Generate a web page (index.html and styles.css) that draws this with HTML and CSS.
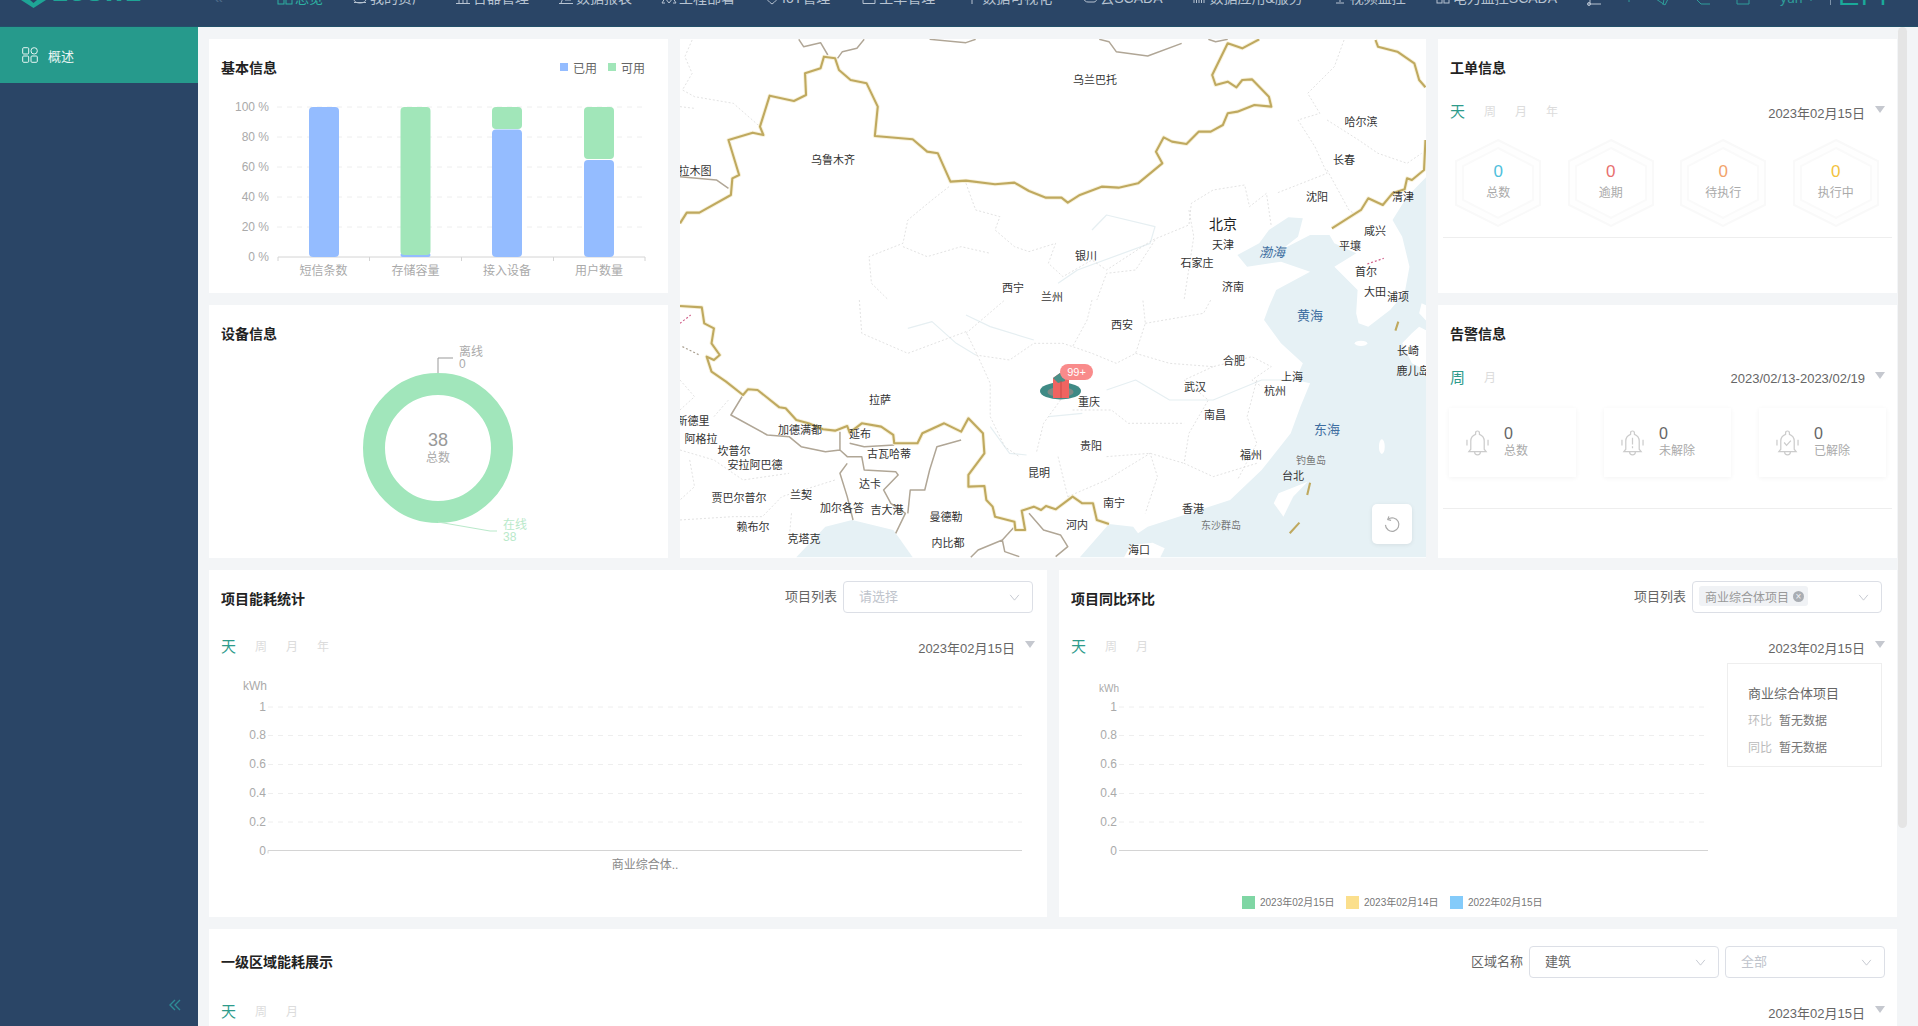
FILE: index.html
```html
<!DOCTYPE html>
<html lang="zh">
<head>
<meta charset="utf-8">
<title>概述</title>
<link rel="stylesheet" href="styles.css">
</head>
<body>
<header class="topbar">
  <div class="logo">
    <svg class="logo-mark" viewBox="0 0 25 8"><path d="M0 0H25L12.500 8Z" fill="#1ea596"/><path d="M9 0H16L12.500 3Z" fill="#2a4566"/></svg>
    <span class="logo-text">EOSWE</span>
  </div>
  <span class="collapse-top">«</span>
  <nav class="nav">
    <a class="nav-item is-active"><svg class="nav-icon" viewBox="0 0 16 16"><rect x="1" y="1" width="6" height="13"/><rect x="9" y="1" width="6" height="13"/></svg>总览</a>
    <a class="nav-item"><svg class="nav-icon" viewBox="0 0 16 16"><path d="M2 9c0 3 3 4 6 4s6-1 6-4M2 12.500h12"/></svg>我的资产</a>
    <a class="nav-item"><svg class="nav-icon" viewBox="0 0 16 16"><path d="M1 13.500h14M4 13V5M8 13V5M12 13V5"/></svg>台器管理</a>
    <a class="nav-item"><svg class="nav-icon" viewBox="0 0 16 16"><path d="M1 13.500h14M3 13l2-5M7 10h6"/></svg>数据报表</a>
    <a class="nav-item"><svg class="nav-icon" viewBox="0 0 16 16"><path d="M1 13l3-5 4 5 4-5 3 5M1 13h3M12 13h3"/></svg>工程部署</a>
    <a class="nav-item nav-iot"><svg class="nav-icon" viewBox="0 0 16 16"><path d="M1 5c1 4 4 7 7 9 3-2 6-5 7-9"/></svg>IoT管理</a>
    <a class="nav-item"><svg class="nav-icon" viewBox="0 0 16 16"><path d="M2 5v8.500h12V5"/></svg>工单管理</a>
    <a class="nav-item"><svg class="nav-icon" viewBox="0 0 16 16"><path d="M8 2v12M5 5l3 4 3-4"/></svg>数据可视化</a>
    <a class="nav-item nav-cloud"><svg class="nav-icon" viewBox="0 0 16 16"><path d="M2 8c0 3 2 4 4 4h6c2 0 3-2 2-4"/></svg>云SCADA</a>
    <a class="nav-item"><svg class="nav-icon" viewBox="0 0 16 16"><path d="M3 4v9M8 4v9M13 4v9M5.500 4v9M10.500 4v9"/></svg>数据应用&amp;服务</a>
    <a class="nav-item"><svg class="nav-icon" viewBox="0 0 16 16"><path d="M8 2v10M4 13h8M5 8c1 2 5 2 6 0"/></svg>视频监控</a>
    <a class="nav-item"><svg class="nav-icon" viewBox="0 0 16 16"><rect x="2" y="1" width="5" height="12"/><rect x="9" y="1" width="5" height="12"/></svg>电力监控SCADA</a>
  </nav>
  <div class="top-tools">
    <svg class="tool tool-line" viewBox="0 0 16 16"><path d="M1 6h13M3 1v5"/><circle cx="2" cy="6" r="1.500"/></svg>
    <svg class="tool" viewBox="0 0 16 16"><path d="M8 1v3"/></svg>
    <svg class="tool tool-gap" viewBox="0 0 16 16"><path d="M1 1l9 6 3-6M9 1l-1 6"/></svg>
    <svg class="tool tool-gap" viewBox="0 0 16 16"><path d="M1 1l5 5h9"/></svg>
    <svg class="tool" viewBox="0 0 16 16"><path d="M2 1v5h12V1"/></svg>
    <span class="user">yun</span>
    <svg class="user-caret" viewBox="0 0 8 8"><path d="M4 0v3"/></svg>
    <span class="tool-sep"></span>
    <span class="brand">EH</span>
  </div>
</header>

<div class="layout">
  <aside class="sidebar">
    <div class="side-item">
      <svg class="side-icon" viewBox="0 0 16 16"><rect x=".7" y=".7" width="6" height="6.300" rx="1"/><rect x="9" y=".7" width="6.300" height="6.300" rx="3"/><rect x=".7" y="9" width="6" height="6.300" rx="1"/><rect x="9" y="9" width="6.300" height="6.300" rx="1"/></svg>
      <span>概述</span>
    </div>
    <svg class="side-collapse" viewBox="0 0 12 12"><path d="M6 1 1 6l5 5M11 1 6 6l5 5"/></svg>
  </aside>

  <main class="main">
    <section class="grid-top">
      <article class="card">
        <div class="card-head">
          <h2 class="card-title">基本信息</h2>
          <div class="legend">
            <i class="swatch swatch-blue"></i><span>已用</span>
            <i class="swatch swatch-green"></i><span>可用</span>
          </div>
        </div>
        <svg class="chart" viewBox="209 78 459 215">
          <g class="grid-lines"><path d="M277 107H645M277 137H645M277 167H645M277 197H645M277 227H645"/></g>
          <path class="axis" d="M278 257H645M278 257v4M369.500 257v4M461.500 257v4M553.500 257v4M645 257v4"/>
          <g class="t-axis t-end">
            <text x="269" y="107">100 %</text><text x="269" y="137">80 %</text><text x="269" y="167">60 %</text><text x="269" y="197">40 %</text><text x="269" y="227">20 %</text><text x="269" y="257">0 %</text>
          </g>
          <g class="t-axis t-mid">
            <text x="323.500" y="271">短信条数</text><text x="415.500" y="271">存储容量</text><text x="507" y="271">接入设备</text><text x="599" y="271">用户数量</text>
          </g>
          <rect class="bar-blue" x="309" y="107" width="30" height="150" rx="4"/>
          <rect class="bar-blue" x="400.500" y="253" width="30" height="4" rx="2"/>
          <rect class="bar-green" x="400.500" y="107" width="30" height="148" rx="4"/>
          <rect class="bar-blue" x="492" y="129.500" width="30" height="127.500" rx="4"/>
          <rect class="bar-green" x="492" y="107" width="30" height="22" rx="4"/>
          <rect class="bar-blue" x="584" y="160" width="30" height="97" rx="4"/>
          <rect class="bar-green" x="584" y="107" width="30" height="52" rx="4"/>
        </svg>
      </article>

      <article class="card map-card">
        <svg class="map" viewBox="680 39 746 519">
          <rect x="680" y="39" width="746" height="519" fill="#fff"/>
          <g transform="translate(680 300) scale(.4847 .3333)">
            <path class="sea" d="M1540-370 1500-310 1470-240 1490-190 1505-100 1495-20 1465 30 1420 80 1400 70 1395 40 1398-30 1350-100 1395-140 1350-170 1340-195 1300-195 1240-150 1275-190 1285-245 1255-248 1215-210 1195-170 1150-135 1170-100 1240-115 1300-85 1230-30 1215 20 1205 60 1240 130 1285 190 1270 240 1300 250 1280 320 1260 400 1200 510 1135 600 1040 645 965 680 945 700 935 680 885 672 825 772H1540Z"/>
            <path class="sea" d="M240 772 300 680 355 660 440 690 455 720 480 772Z"/>
            <path class="land" d="M915 775 930 735 975 728 1000 745 990 775Z"/>
            <path class="land" d="M1295 545 1235 580 1225 610 1245 650 1265 590Z"/>
            <path class="land" d="M1525 80 1545 95V215L1510 190 1490 130 1510 100Z"/>
            <path class="land" d="M1530 10 1545 20V70L1525 40Z"/>
            <ellipse class="land" cx="1405" cy="130" rx="13" ry="8"/>
            <ellipse class="land" cx="1448" cy="440" rx="6" ry="22"/>

            <g class="river">
              <path d="M470 85 520 65 570 130 610 165M590 45 640 80 730 120M880 270 940 240 1010 300 1100 300 1200 240 1280 240M640 380 680 460 715 465M760 350 830 340"/>
            </g>
            <g class="province">
              <path d="M370 0 375 100 470 160 590 95 615 170 640 250 640 350 670 440 700 470M590 100 670 0M610 165 680 180 730 130 790 130 850 160 900 190 940 160 960 70 955 0M850 0 840 60 810 140M960 70 1080 40 1095 0M940 160 1010 190 1100 200 1180 170 1220 200 1180 240 1200 260M1100 200 1040 240 1090 300 1050 400 1040 490 1100 530 1190 490M1190 240 1170 350 1190 430 1150 540M790 290 750 370 735 460M810 330 890 330 925 370 1040 370M780 470 790 530 800 590M800 590 880 540 970 460 985 530 960 640M880 470 970 460 1040 490M0 240 30 290 0 330M70 350 100 300M0 450 70 480 130 540 225 520M0 660 110 650 170 650 210 590 320 540M20 480 30 560 0 600M230 640 225 720"/>
            </g>
            <path class="pink" d="M0 70 22 45"/>
            <path class="greydots" d="M5 140 40 165"/>
            <g class="intl">
              <path d="M130 285 105 345 180 405 225 410 250 440 300 455 330 450 330 395M330 450 345 470 375 470 380 510 445 515 450 525 420 570 435 610 465 640 445 700M345 490 330 520 345 590 357 660M350 430 380 440 442 435M580 420 530 440 515 510 505 570 475 570 470 640M720 640 750 690 785 705 800 740 775 770M690 680 665 720 615 750 600 772M665 720 670 755 700 770"/>
            </g>
            <path class="gold-halo" d="M0 18 45 22 50 70 70 85 65 130 82 165 70 180 55 170 65 215 95 245 130 285 140 268 160 270 205 322 218 325 240 360 265 370 295 388 320 392 345 378 350 398 375 370 415 380 440 405 442 430 490 430 500 400 545 370 580 395 595 355 625 400 628 460 595 525 595 560 628 558 632 600 645 620 650 650 690 665 692 690 712 690 705 632 730 620 745 630 755 618 775 628 810 590 830 610 852 610 860 660 885 672"/>
            <path class="gold" d="M0 18 45 22 50 70 70 85 65 130 82 165 70 180 55 170 65 215 95 245 130 285 140 268 160 270 205 322 218 325 240 360 265 370 295 388 320 392 345 378 350 398 375 370 415 380 440 405 442 430 490 430 500 400 545 370 580 395 595 355 625 400 628 460 595 525 595 560 628 558 632 600 645 620 650 650 690 665 692 690 712 690 705 632 730 620 745 630 755 618 775 628 810 590 830 610 852 610 860 660 885 672"/>
            <path class="gold" d="M1482 65 1476 92M1300 548 1294 585M1278 668 1258 700"/>
          </g>
          <g transform="translate(680 30) scale(.4847 .3333)">
            <g class="river"><path d="M850 600 880 555 980 590 970 640 820 720 780 760"/></g>
            <g class="province">
              <path d="M25 30 10 80 25 130 5 180 30 200 110 220 165 290M0 230 30 235M555 470 520 510 470 570 460 640 390 680 395 760 430 810M590 460 610 540 660 560 650 600 690 650 720 665 775 640 760 700 790 740 850 690 880 720 975 630 1050 585 1055 520 1100 480 1165 465 1175 530 1210 490 1220 590M1370 30 1350 110 1295 190 1320 250 1275 270 1310 350 1335 430 1230 490M1335 270 1400 330 1440 370 1500 400 1530 370M1335 420 1380 540 1390 550M460 650 510 680 580 650 640 670M980 630 940 720 880 730 860 810M1050 540 1060 620 1040 810"/>
            </g>
            <path class="pink" d="M1418 702 1452 685"/>
            <g class="intl">
              <path d="M245 28 255 50 290 38 305 75M325 85 335 65 365 55 380 28M515 28 590 38 610 28M865 28 885 35 900 65 965 78 1035 40M1090 28 1105 35 1130 28M0 440 75 450 100 475"/>
            </g>
            <path class="gold-halo" d="M0 580 14 548 40 548 105 495 108 445 122 435 100 330 150 308 172 315 165 290 185 197 235 213 260 195 258 130 290 115 297 80 320 85 328 120 352 150 385 160 408 230 402 318 480 328 510 365 532 370 558 455 590 452 650 463 690 458 720 483 755 503 787 503 800 518 825 495 870 470 905 473 945 460 995 400 982 365 998 322 1015 335 1045 342 1070 305 1095 305 1120 285 1130 250 1150 245 1185 225 1220 230 1215 200 1180 148 1160 150 1148 172 1130 155 1105 165 1098 135 1130 40 1160 55 1195 28M1435 30 1440 50 1480 65 1515 100 1525 150 1538 172M1538 330 1535 420 1510 450 1500 445 1495 478 1470 490 1450 525 1420 505 1405 540 1345 595"/>
            <path class="gold" d="M0 580 14 548 40 548 105 495 108 445 122 435 100 330 150 308 172 315 165 290 185 197 235 213 260 195 258 130 290 115 297 80 320 85 328 120 352 150 385 160 408 230 402 318 480 328 510 365 532 370 558 455 590 452 650 463 690 458 720 483 755 503 787 503 800 518 825 495 870 470 905 473 945 460 995 400 982 365 998 322 1015 335 1045 342 1070 305 1095 305 1120 285 1130 250 1150 245 1185 225 1220 230 1215 200 1180 148 1160 150 1148 172 1130 155 1105 165 1098 135 1130 40 1160 55 1195 28M1435 30 1440 50 1480 65 1515 100 1525 150 1538 172M1538 330 1535 420 1510 450 1500 445 1495 478 1470 490 1450 525 1420 505 1405 540 1345 595"/>
          </g>

          <g class="city">
            <text x="1095" y="80">乌兰巴托</text><text x="833" y="160">乌鲁木齐</text><text x="695" y="171">拉木图</text>
            <text x="1361" y="122">哈尔滨</text><text x="1344" y="160">长春</text><text x="1317" y="197">沈阳</text><text x="1403" y="197">清津</text>
            <text x="1375" y="231">咸兴</text><text x="1350" y="246">平壤</text><text x="1223" y="245">天津</text><text x="1197" y="263">石家庄</text>
            <text x="1086" y="256">银川</text><text x="1366" y="272">首尔</text><text x="1233" y="287">济南</text><text x="1375" y="292">大田</text><text x="1398" y="297">浦项</text>
            <text x="1013" y="288">西宁</text><text x="1052" y="297">兰州</text><text x="1122" y="325">西安</text><text x="1408" y="351">长崎</text><text x="1234" y="361">合肥</text>
            <text x="1413" y="371">鹿儿岛</text><text x="1292" y="377">上海</text><text x="1195" y="387">武汉</text><text x="1275" y="391">杭州</text><text x="880" y="400">拉萨</text>
            <text x="1089" y="402">重庆</text><text x="1215" y="415">南昌</text><text x="693" y="421">新德里</text><text x="800" y="430">加德满都</text><text x="860" y="434">延布</text>
            <text x="701" y="439">阿格拉</text><text x="1091" y="446">贵阳</text><text x="889" y="454">古瓦哈蒂</text><text x="734" y="451">坎普尔</text><text x="1251" y="455">福州</text>
            <text x="755" y="465">安拉阿巴德</text><text x="1293" y="476">台北</text><text x="1039" y="473">昆明</text><text x="870" y="484">达卡</text><text x="739" y="498">贾巴尔普尔</text>
            <text x="801" y="495">兰契</text><text x="1114" y="503">南宁</text><text x="842" y="508">加尔各答</text><text x="887" y="510">吉大港</text><text x="1193" y="509">香港</text>
            <text x="946" y="517">曼德勒</text><text x="753" y="527">赖布尔</text><text x="1077" y="525">河内</text><text x="804" y="539">克塔克</text><text x="948" y="543">内比都</text><text x="1139" y="550">海口</text>
          </g>
          <g class="city city-soft">
            <text x="1311" y="460">钓鱼岛</text><text x="1221" y="525">东沙群岛</text>
          </g>
          <text class="city-big" x="1223" y="224">北京</text>
          <g class="sea-name"><text class="italic" x="1272" y="252">渤海</text><text x="1310" y="315">黄海</text><text x="1327" y="429">东海</text></g>

          <ellipse cx="1060.500" cy="391" rx="20.500" ry="8.500" fill="#3f8a85"/>
          <ellipse cx="1060.500" cy="392" rx="13" ry="5" fill="#7f8a85"/>
          <path d="M1053 378 1060 373 1069 378V398H1053Z" fill="#ef6461"/>
          <path d="M1053 378 1060 373 1065 376V381L1058 383Z" fill="#4a9088"/>
          <path d="M1061 381V398" stroke="#c94a48"/>
          <rect x="1060" y="364" width="33" height="16" rx="8" fill="#f98b8b"/>
          <text class="badge-text" x="1076.500" y="372">99+</text>
        </svg>
        <button class="map-reset" type="button" aria-label="刷新">
          <svg viewBox="0 0 20 20"><path d="M5.500 4.800A7.500 7.500 0 1 1 2.700 11"/><path d="M6.500 1.500 5.300 5.200 9 6"/></svg>
        </button>
      </article>

      <article class="card">
        <div class="card-head"><h2 class="card-title">工单信息</h2></div>
        <div class="period">
          <div class="tabs"><span class="tab is-on">天</span><span class="tab">周</span><span class="tab">月</span><span class="tab">年</span></div>
          <div class="date">2023年02月15日<i class="caret"></i></div>
        </div>
        <div class="hexes">
          <div class="hex"><svg class="hex-bg" viewBox="0 0 88 90"><path d="M44 2 86 23V67L44 88 2 67V23Z"/><path class="hex-in" d="M44 10 79 28V62L44 80 9 62V28Z"/></svg><div class="hex-body"><b class="c-cyan">0</b><span>总数</span></div></div>
          <div class="hex"><svg class="hex-bg" viewBox="0 0 88 90"><path d="M44 2 86 23V67L44 88 2 67V23Z"/><path class="hex-in" d="M44 10 79 28V62L44 80 9 62V28Z"/></svg><div class="hex-body"><b class="c-red">0</b><span>逾期</span></div></div>
          <div class="hex"><svg class="hex-bg" viewBox="0 0 88 90"><path d="M44 2 86 23V67L44 88 2 67V23Z"/><path class="hex-in" d="M44 10 79 28V62L44 80 9 62V28Z"/></svg><div class="hex-body"><b class="c-orange">0</b><span>待执行</span></div></div>
          <div class="hex"><svg class="hex-bg" viewBox="0 0 88 90"><path d="M44 2 86 23V67L44 88 2 67V23Z"/><path class="hex-in" d="M44 10 79 28V62L44 80 9 62V28Z"/></svg><div class="hex-body"><b class="c-yellow">0</b><span>执行中</span></div></div>
        </div>
        <hr class="rule rule-orders">
      </article>

      <article class="card">
        <div class="card-head"><h2 class="card-title">设备信息</h2></div>
        <svg class="chart" viewBox="209 344 459 214">
          <circle cx="438" cy="448" r="64" fill="none" stroke="#a1e6bb" stroke-width="22"/>
          <path d="M438 373V358H453" fill="none" stroke="#999"/>
          <path d="M438 522 490 531H497" fill="none" stroke="#b9e9ca"/>
          <text class="donut-num" x="438" y="440">38</text>
          <text class="donut-sub" x="438" y="458">总数</text>
          <g class="t-grey"><text x="459" y="352">离线</text><text x="459" y="364">0</text></g>
          <g class="t-mint"><text x="503" y="525">在线</text><text x="503" y="537">38</text></g>
        </svg>
      </article>

      <article class="card">
        <div class="card-head"><h2 class="card-title">告警信息</h2></div>
        <div class="period">
          <div class="tabs"><span class="tab is-on">周</span><span class="tab">月</span></div>
          <div class="date">2023/02/13-2023/02/19<i class="caret"></i></div>
        </div>
        <div class="tiles">
          <div class="tile">
            <svg class="bell" viewBox="0 0 24 28"><path d="M12 2a2 2 0 0 1 2 2v1.500a7.500 7.500 0 0 1 5 7V21l2 2.500H3L5 21v-8.500a7.500 7.500 0 0 1 5-7V4a2 2 0 0 1 2-2z"/><path d="M9 24a3 3 0 0 0 6 0M1 11v6M23 11v6"/></svg>
            <div class="tile-text"><b>0</b><span>总数</span></div>
          </div>
          <div class="tile">
            <svg class="bell" viewBox="0 0 24 28"><path d="M12 2a2 2 0 0 1 2 2v1.500a7.500 7.500 0 0 1 5 7V21l2 2.500H3L5 21v-8.500a7.500 7.500 0 0 1 5-7V4a2 2 0 0 1 2-2z"/><path d="M9 24a3 3 0 0 0 6 0M1 11v6M23 11v6M12 9v7M12 18v2"/></svg>
            <div class="tile-text"><b>0</b><span>未解除</span></div>
          </div>
          <div class="tile">
            <svg class="bell" viewBox="0 0 24 28"><path d="M12 2a2 2 0 0 1 2 2v1.500a7.500 7.500 0 0 1 5 7V21l2 2.500H3L5 21v-8.500a7.500 7.500 0 0 1 5-7V4a2 2 0 0 1 2-2z"/><path d="M9 24a3 3 0 0 0 6 0M1 11v6M23 11v6M8.500 14l2.500 3 4.500-5"/></svg>
            <div class="tile-text"><b>0</b><span>已解除</span></div>
          </div>
        </div>
        <hr class="rule rule-alarms">
      </article>
    </section>

    <section class="grid-mid">
      <article class="card">
        <div class="card-head head-tool">
          <h2 class="card-title">项目能耗统计</h2>
          <div class="filter"><label>项目列表</label>
            <div class="select"><span class="placeholder">请选择</span><svg class="chev" viewBox="0 0 12 8"><path d="M1 1l5 6 5-6"/></svg></div>
          </div>
        </div>
        <div class="period">
          <div class="tabs"><span class="tab is-on">天</span><span class="tab">周</span><span class="tab">月</span><span class="tab">年</span></div>
          <div class="date">2023年02月15日<i class="caret"></i></div>
        </div>
        <svg class="chart" viewBox="209 659 838 258">
          <g class="grid-lines"><path d="M268 707H1022M268 735.500H1022M268 764.500H1022M268 793.500H1022M268 822H1022"/></g>
          <path class="axis" d="M268 850.500H1022M268 850.500v3"/>
          <g class="t-axis t-end">
            <text x="267" y="686">kWh</text><text x="266" y="707">1</text><text x="266" y="735">0.8</text><text x="266" y="764">0.6</text><text x="266" y="793">0.4</text><text x="266" y="822">0.2</text><text x="266" y="851">0</text>
          </g>
          <text class="t-cat" x="645" y="865">商业综合体..</text>
        </svg>
      </article>

      <article class="card">
        <div class="card-head head-tool head-compare">
          <h2 class="card-title">项目同比环比</h2>
          <div class="filter"><label>项目列表</label>
            <div class="select select-tagged"><span class="tag">商业综合体项目<i class="tag-x">×</i></span><svg class="chev" viewBox="0 0 12 8"><path d="M1 1l5 6 5-6"/></svg></div>
          </div>
        </div>
        <div class="period">
          <div class="tabs"><span class="tab is-on">天</span><span class="tab">周</span><span class="tab">月</span></div>
          <div class="date">2023年02月15日<i class="caret"></i></div>
        </div>
        <div class="compare">
          <svg class="chart compare-chart" viewBox="1059 659 668 258">
            <g class="grid-lines"><path d="M1119 707H1708M1119 735.500H1708M1119 764.500H1708M1119 793.500H1708M1119 822H1708"/></g>
            <path class="axis" d="M1119 850.500H1708"/>
            <text class="t-small" x="1119" y="688">kWh</text>
            <g class="t-axis t-end">
              <text x="1117" y="707">1</text><text x="1117" y="735">0.8</text><text x="1117" y="764">0.6</text><text x="1117" y="793">0.4</text><text x="1117" y="822">0.2</text><text x="1117" y="851">0</text>
            </g>
            <rect x="1242" y="896" width="13" height="13" fill="#7fd6a4"/>
            <rect x="1346" y="896" width="13" height="13" fill="#fbdf8c"/>
            <rect x="1450" y="896" width="13" height="13" fill="#84cbfa"/>
            <g class="t-leg"><text x="1260" y="902">2023年02月15日</text><text x="1364" y="902">2023年02月14日</text><text x="1468" y="902">2022年02月15日</text></g>
          </svg>
          <div class="ratio">
            <p class="ratio-name">商业综合体项目</p>
            <p class="ratio-row"><span>环比</span>暂无数据</p>
            <p class="ratio-row"><span>同比</span>暂无数据</p>
          </div>
        </div>
      </article>
    </section>

    <section class="card card-area">
      <div class="card-head head-area">
        <h2 class="card-title">一级区域能耗展示</h2>
        <div class="filter"><label>区域名称</label>
          <div class="select"><span class="value">建筑</span><svg class="chev" viewBox="0 0 12 8"><path d="M1 1l5 6 5-6"/></svg></div>
          <div class="select select-sm"><span class="placeholder">全部</span><svg class="chev" viewBox="0 0 12 8"><path d="M1 1l5 6 5-6"/></svg></div>
        </div>
      </div>
      <div class="period period-area">
        <div class="tabs"><span class="tab is-on">天</span><span class="tab">周</span><span class="tab">月</span></div>
        <div class="date">2023年02月15日<i class="caret"></i></div>
      </div>
    </section>
  </main>
</div>
<div class="scroll-thumb"></div>
</body>
</html>
```
FILE: styles.css
```css
* { box-sizing: border-box; }
html, body { margin: 0; height: 1026px; overflow: hidden; }
body {
  position: relative;
  width: 1918px;
  font-family: "Liberation Sans", "Noto Sans CJK SC", sans-serif;
  font-size: 12px;
  color: #666;
  background: #f3f5f7;
}

/* top bar */
.topbar {
  display: flex;
  align-items: flex-start;
  height: 27px;
  padding-left: 21px;
  overflow: hidden;
  background: #2a4566;
  border-bottom: 1px solid #23506a;
}
.logo { display: flex; align-items: flex-start; gap: 6px; width: 193px; flex: none; }
.logo-mark { width: 25px; height: 8px; }
.logo-text {
  margin-top: -20px;
  font-size: 24px;
  line-height: 26px;
  font-weight: 700;
  color: #1ea596;
}
.collapse-top {
  width: 63px;
  flex: none;
  margin-top: -12px;
  font-size: 16px;
  line-height: 20px;
  color: #4d6a88;
}
.nav { display: flex; gap: 29px; margin-top: -12px; flex: none; }
.nav-item {
  display: flex;
  align-items: center;
  gap: 2px;
  height: 20px;
  font-size: 14px;
  line-height: 20px;
  color: #b7c3d1;
  white-space: nowrap;
}
.nav-item.is-active { color: #2db3a3; }
.nav-iot { margin-right: 2px; }
.nav-cloud { margin-left: 1px; }
.nav-icon { width: 16px; height: 16px; fill: none; stroke: currentColor; stroke-width: 1; }
.top-tools {
  display: flex;
  align-items: flex-start;
  margin-left: 30px;
  flex: none;
}
.tool {
  width: 16px;
  height: 16px;
  margin: -2px 18px 0 0;
  fill: none;
  stroke: #2f9d9a;
  stroke-width: 1;
}
.tool-line { stroke: #b7c3d1; }
.tool-gap { margin-right: 24px; }
.user { margin: -12px 0 0 11px; font-size: 14px; line-height: 20px; color: #2f9d9a; }
.user-caret { width: 8px; height: 8px; margin: -2px 15px 0 4px; stroke: #2f9d9a; }
.tool-sep { width: 1px; height: 5px; background: #7d93aa; }
.brand {
  margin: -26px 0 0 6px;
  font-family: "Roboto", "Liberation Sans", sans-serif;
  font-size: 40px;
  line-height: 36px;
  font-weight: 300;
  color: #1aaa9a;
}

/* frame */
.layout { display: flex; height: 999px; }
.sidebar {
  display: flex;
  flex-direction: column;
  width: 198px;
  flex: none;
  background: #2a4566;
}
.side-item {
  display: flex;
  align-items: center;
  gap: 10px;
  height: 56px;
  padding-left: 22px;
  font-size: 13px;
  color: #e8f5f3;
  background: #269a8c;
}
.side-icon { width: 16px; height: 16px; fill: none; stroke: #e8f5f3; stroke-width: 1; }
.side-collapse {
  width: 12px;
  height: 12px;
  margin: auto 17px 15px auto;
  fill: none;
  stroke: #2e8b95;
  stroke-width: 1.400;
}
.main {
  flex: 1;
  min-width: 0;
  padding: 12px 21px 0 11px;
  overflow: hidden;
  background: #f3f5f7;
}
.grid-top {
  display: grid;
  grid-template-columns: 459px 1fr 459px;
  grid-template-rows: 254px 253px;
  gap: 12px;
}
.grid-mid {
  display: grid;
  grid-template-columns: 838px 1fr;
  grid-template-rows: 347px;
  gap: 12px;
  margin-top: 12px;
}
.card { background: #fff; min-width: 0; }
.card-area { margin-top: 12px; height: 300px; }

/* headers */
.card-head {
  display: flex;
  justify-content: space-between;
  align-items: center;
  height: 39px;
  padding: 19px 23px 0 12px;
}
.card-title {
  margin: 0;
  font-size: 14px;
  line-height: 20px;
  font-weight: 700;
  color: #222;
}
.legend { display: flex; align-items: center; margin-top: -2px; font-size: 12px; color: #666; }
.legend span + .swatch { margin-left: 11px; }
.swatch { width: 8px; height: 8px; margin-right: 5px; }
.swatch-blue { background: #94bcff; }
.swatch-green { background: #a1e6b9; }
.head-tool { height: 43px; padding: 11px 14px 0 12px; }
.head-compare { padding-right: 15px; }
.head-tool .card-title { margin-top: 4px; }
.head-area { height: 49px; padding: 17px 12px 0 12px; }
.filter { display: flex; align-items: center; gap: 6px; font-size: 13px; color: #666; }
.filter label { margin-top: -4px; }
.select {
  display: flex;
  align-items: center;
  justify-content: space-between;
  width: 190px;
  height: 32px;
  padding: 0 12px 0 15px;
  font-size: 13px;
  background: #fff;
  border: 1px solid #dcdfe6;
  border-radius: 4px;
}
.select-sm { width: 160px; }
.select-tagged { padding-left: 6px; }
.placeholder, .value { margin-top: -3px; }
.placeholder { color: #c0c4cc; }
.value { color: #666; }
.chev { width: 11px; height: 7px; fill: none; stroke: #c0c4cc; stroke-width: 1; }
.tag {
  display: flex;
  align-items: center;
  justify-content: space-between;
  width: 109px;
  height: 20px;
  margin-top: -2px;
  padding: 0 4px 0 6px;
  font-size: 12px;
  color: #999;
  background: #f0f2f5;
  border-radius: 3px;
}
.tag-x {
  width: 11px;
  height: 11px;
  border-radius: 50%;
  font-size: 10px;
  line-height: 11px;
  font-style: normal;
  text-align: center;
  color: #f0f2f5;
  background: #a9adb3;
}

/* period row */
.period {
  display: flex;
  justify-content: space-between;
  align-items: center;
  height: 24px;
  margin-top: 22px;
  padding: 0 12px;
}
.period-area { margin-top: 22px; }
.tabs { display: flex; align-items: center; gap: 19px; margin-top: -4px; }
.tab { font-size: 12px; color: #dcdcdc; }
.tab.is-on { font-size: 15px; color: #2e9b8b; }
.date { display: flex; align-items: center; gap: 10px; font-size: 13px; color: #666; }
.caret {
  width: 0;
  height: 0;
  margin-top: -6px;
  border-left: 5.500px solid transparent;
  border-right: 5.500px solid transparent;
  border-top: 7px solid #c5c8cf;
}

/* charts */
.chart { display: block; width: 100%; }
.grid-lines path { fill: none; stroke: #eee; stroke-dasharray: 5 5; }
.axis { fill: none; stroke: #d4d4d4; }
.bar-blue { fill: #94bcff; }
.bar-green { fill: #a1e6b9; }
.chart text, .map text { dominant-baseline: central; }
.t-axis { font-size: 12px; fill: #aaa; }
.t-end { text-anchor: end; }
.t-mid { text-anchor: middle; }
.t-cat { font-size: 12px; fill: #888; text-anchor: middle; }
.t-small { font-size: 10px; fill: #aaa; text-anchor: end; }
.t-leg { font-size: 10px; fill: #777; }
.t-grey { font-size: 12px; fill: #aaa; }
.t-mint { font-size: 12px; fill: #b9e9ca; }
.donut-num { font-size: 18px; fill: #999; text-anchor: middle; }
.donut-sub { font-size: 12px; fill: #aaa; text-anchor: middle; }

/* map */
.map-card { grid-row: 1 / span 2; grid-column: 2; position: relative; }
.map { display: block; width: 100%; height: 100%; }
.sea { fill: #e6f1f5; }
.land { fill: #fff; }
.province path, .river path, .intl path, .gold, .gold-halo, .pink, .greydots {
  fill: none;
  vector-effect: non-scaling-stroke;
  stroke-linejoin: round;
}
.province path { stroke: #dadada; stroke-width: .8; stroke-dasharray: 2 2; }
.river path { stroke: #e6eff2; stroke-width: 1.200; }
.intl path { stroke: #b0a696; stroke-width: 1.500; }
.gold { stroke: #bfa95f; stroke-width: 2.100; }
.gold-halo { stroke: #f8f2dc; stroke-width: 4; }
.pink { stroke: #d0608a; stroke-width: 1.200; stroke-dasharray: 2 2; }
.greydots { stroke: #a89e8e; stroke-width: 1.200; stroke-dasharray: 2 2; }
.city { font-size: 11px; fill: #333; text-anchor: middle; }
.city-soft { fill: #777; font-size: 10px; }
.city-big { font-size: 14px; fill: #222; text-anchor: middle; }
.sea-name { font-size: 13px; fill: #3e6ea0; text-anchor: middle; }
.sea-name .italic { font-style: italic; }
.badge-text { font-size: 11px; fill: #fff; text-anchor: middle; }
.map-reset {
  position: absolute;
  left: 692px;
  top: 465px;
  display: flex;
  align-items: center;
  justify-content: center;
  width: 40px;
  height: 40px;
  padding: 0;
  background: #fff;
  border: 0;
  border-radius: 5px;
  box-shadow: 0 1px 4px rgba(0, 0, 0, .08);
}
.map-reset svg { width: 18px; height: 18px; fill: none; stroke: #aaa; stroke-width: 1.300; }

/* orders */
.hexes {
  display: grid;
  grid-template-columns: repeat(4, 1fr);
  margin-top: 14px;
  padding: 0 5px 0 4px;
}
.hex { display: grid; place-items: center; height: 90px; }
.hex-bg, .hex-body { grid-area: 1 / 1; }
.hex-bg { width: 88px; height: 90px; fill: #fefefe; stroke: #f9f9f9; stroke-width: 2; }
.hex-in { fill: #fff; stroke: #fafafa; }
.hex-body {
  display: flex;
  flex-direction: column;
  align-items: center;
  gap: 1px;
  padding-bottom: 3px;
  font-size: 12px;
  line-height: 18px;
  color: #aaa;
}
.hex-body b { font-size: 17px; line-height: 22px; font-weight: 400; }
.c-cyan { color: #4fc0dc; }
.c-red { color: #e87070; }
.c-orange { color: #f2a36b; }
.c-yellow { color: #f3c33f; }
.rule { height: 1px; margin: 0 5px; background: #eee; border: 0; }
.rule-orders { margin-top: 9px; }
.rule-alarms { margin-top: 31px; }

/* alarms */
.tiles { display: flex; gap: 28px; margin-top: 18px; padding-left: 11px; }
.tile {
  display: flex;
  align-items: center;
  gap: 15px;
  width: 127px;
  height: 69px;
  padding-left: 17px;
  background: #fff;
  box-shadow: 0 1px 5px rgba(0, 0, 0, .05);
}
.bell { width: 23px; height: 27px; fill: none; stroke: #ccc; stroke-width: 1.300; }
.tile-text { display: flex; flex-direction: column; font-size: 12px; line-height: 17px; color: #aaa; }
.tile-text b { font-size: 16px; line-height: 18px; font-weight: 400; color: #666; }

/* compare */
.compare { display: flex; align-items: flex-start; }
.compare-chart { width: 668px; flex: none; }
.ratio {
  width: 155px;
  height: 104px;
  margin-top: 4px;
  padding: 21px 0 0 20px;
  border: 1px solid #eee;
  font-size: 12px;
  color: #777;
}
.ratio p { margin: 0; line-height: 18px; }
.ratio-name { font-size: 13px; color: #666; }
.ratio p.ratio-row { margin-top: 9px; }
.ratio-row span { margin-right: 7px; color: #bbb; }

.scroll-thumb {
  position: absolute;
  left: 1898px;
  top: 27px;
  width: 9px;
  height: 801px;
  background: #e5e5e5;
  border-radius: 5px;
}
```
